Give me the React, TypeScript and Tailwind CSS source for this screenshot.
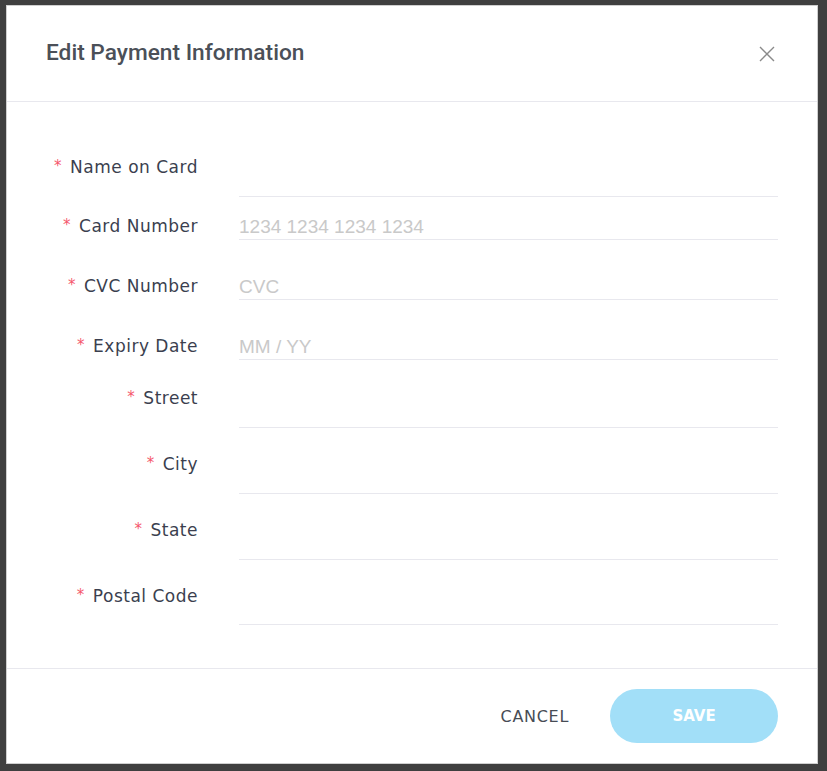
import React from 'react';

const labelFont = { fontFamily: '"DejaVu Sans", "Open Sans", sans-serif' };

function Label({ text, top }: { text: string; top?: boolean }) {
  return (
    <div
      className={`w-[191px] shrink-0 flex justify-end text-[17px] leading-[22px] tracking-[0.5px] text-[#3b3f4f] ${top ? 'pt-[25px]' : 'items-center pt-[2px]'}`}
      style={labelFont}
    >
      <span className="whitespace-nowrap">
        <span className="relative -top-[2px] text-[#f5576c] text-[15px] mr-[8px]">*</span>
        {text}
      </span>
    </div>
  );
}

function Field({ placeholder }: { placeholder?: string }) {
  return (
    <input
      placeholder={placeholder}
      className="w-full h-full pt-[3px] bg-transparent outline-none text-[19px] text-[#333] placeholder:text-[#c9c9c9]"
      style={{ fontFamily: '"Liberation Sans", Arial, sans-serif' }}
    />
  );
}

export default function App() {
  return (
    <div className="h-[771px] w-[827px] bg-[#3f3f3f] pt-[5px] pl-[6px]">
      <div className="w-[812px] h-[759px] bg-white border border-[#cfcfcf] flex flex-col">
        <div className="h-[96px] shrink-0 border-b border-[#e8e8ee] flex items-center justify-between pl-[39px] pr-[42px]">
          <h2
            className="text-[22.7px] font-medium text-[#4b5058]"
            style={{ fontFamily: 'Roboto, "Liberation Sans", sans-serif' }}
          >
            Edit Payment Information
          </h2>
          <button className="w-[16px] h-[16px] mt-[1px]" aria-label="Close">
            <svg viewBox="0 0 16 16" width="16" height="16" fill="none" stroke="#8a8a8a" strokeWidth="1.4">
              <path d="M1 1L15 15M15 1L1 15" />
            </svg>
          </button>
        </div>

        <div className="flex-1 pt-[34px] pr-[39px]">
          <div className="flex h-[61px]">
            <Label text="Name on Card" />
            <div className="ml-[41px] flex-1 border-b border-[#e8e8ee]">
              <Field />
            </div>
          </div>
          <div className="flex h-[29px] mt-[14px]">
            <Label text="Card Number" />
            <div className="ml-[41px] flex-1 border-b border-[#e8e8ee]">
              <Field placeholder="1234 1234 1234 1234" />
            </div>
          </div>
          <div className="flex h-[29px] mt-[31px]">
            <Label text="CVC Number" />
            <div className="ml-[41px] flex-1 border-b border-[#e8e8ee]">
              <Field placeholder="CVC" />
            </div>
          </div>
          <div className="flex h-[29px] mt-[31px]">
            <Label text="Expiry Date" />
            <div className="ml-[41px] flex-1 border-b border-[#e8e8ee]">
              <Field placeholder="MM / YY" />
            </div>
          </div>
          <div className="flex h-[66px] mt-[2px]">
            <Label text="Street" top />
            <div className="ml-[41px] flex-1 border-b border-[#e8e8ee]" />
          </div>
          <div className="flex h-[66px]">
            <Label text="City" top />
            <div className="ml-[41px] flex-1 border-b border-[#e8e8ee]" />
          </div>
          <div className="flex h-[66px]">
            <Label text="State" top />
            <div className="ml-[41px] flex-1 border-b border-[#e8e8ee]" />
          </div>
          <div className="flex h-[65px]">
            <Label text="Postal Code" top />
            <div className="ml-[41px] flex-1 border-b border-[#e8e8ee]" />
          </div>
        </div>

        <div className="h-[95px] shrink-0 border-t border-[#e8e8ee] flex items-center justify-end pr-[39px] gap-[41px]">
          <button
            className="text-[16px] text-[#474c55] tracking-[0.7px] mt-[2px]"
            style={labelFont}
          >
            CANCEL
          </button>
          <button
            className="w-[168px] h-[54px] rounded-full bg-[#a2dff8] text-white text-[15px] font-bold"
            style={labelFont}
          >
            SAVE
          </button>
        </div>
      </div>
    </div>
  );
}
